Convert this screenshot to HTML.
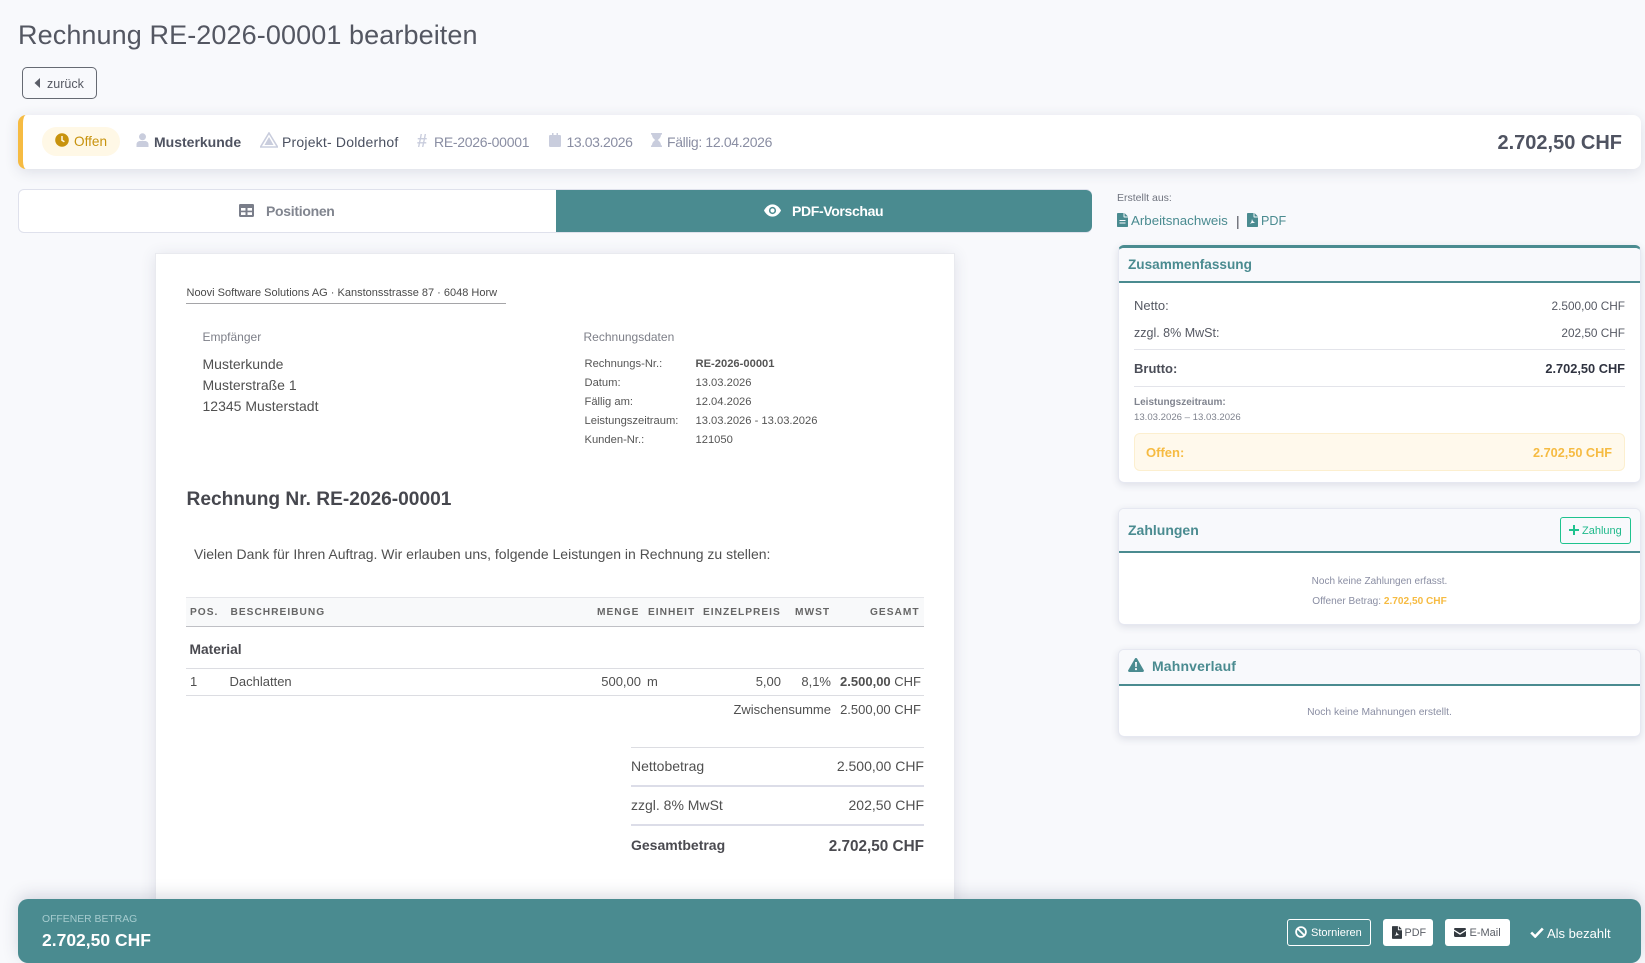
<!DOCTYPE html>
<html lang="de"><head><meta charset="utf-8"><title>Rechnung</title>
<style>
*{box-sizing:border-box}
html,body{margin:0;padding:0;width:1645px;height:963px;overflow:hidden}
body{position:relative;background:#f8f9fc;font-family:"Liberation Sans",Arial,sans-serif;color:#4b4e58}
.b{position:absolute}
.t{position:absolute;white-space:nowrap;line-height:20px;height:20px}
.r{text-align:right}
.c{text-align:center}
svg{position:absolute;display:block}
.card{position:absolute;background:#fff;border-radius:6px;box-shadow:0 2px 8px rgba(60,65,100,.14);border:1px solid #e6e8f1;overflow:hidden}
.hd{position:absolute;left:0;right:0;top:0;background:#f8f9fc;border-bottom:2.5px solid #4a8b90}
.ln{position:absolute;height:1px;background:#e3e4ea}
.h{top:603px;font-size:10.2px;font-weight:700;color:#666;letter-spacing:1px}
.d{font-size:11.2px;color:#555}
.m{font-size:13px;color:#505050}
</style></head><body>

<div class="t" style="left:18px;top:20px;height:30px;line-height:30px;font-size:27px;color:#545762;letter-spacing:.1px">Rechnung RE-2026-00001 bearbeiten</div>
<div class="b" style="left:22px;top:67px;width:75px;height:32px;border:1px solid #666a73;border-radius:5px"></div>
<svg style="left:34px;top:78px" width="7" height="10" viewBox="0 0 7 10"><path d="M6 0L0.5 5 6 10z" fill="#5a5d67"/></svg>
<div class="t" style="left:47px;top:74px;font-size:12.5px;color:#565963">zurück</div>

<div class="b" style="left:18px;top:115px;width:1623px;height:54px;background:#fff;border-left:5px solid #f6bb42;border-radius:8px;box-shadow:0 3px 14px rgba(60,65,100,.14)"></div>
<div class="b" style="left:42px;top:127px;width:78px;height:29px;background:#fff8e6;border-radius:15px"></div>
<svg style="left:55px;top:133px" width="14" height="14" viewBox="0 0 14 14"><circle cx="7" cy="7" r="6.8" fill="#c8930e"/><path d="M7 3v4.3l2.4 1.5" stroke="#fff8e6" stroke-width="1.5" fill="none"/></svg>
<div class="t" style="left:74px;top:132px;font-size:13.6px;color:#c8930e">Offen</div>
<svg style="left:136px;top:133px" width="13" height="14" viewBox="0 0 13 14"><circle cx="6.5" cy="3.8" r="3.5" fill="#c9cddd"/><path d="M0.5 14v-2.5C.5 9 2.5 8 4 8h5c1.500 0 3.500 1 3.500 3.500V14z" fill="#c9cddd"/></svg>
<div class="t" style="left:154px;top:132px;font-size:14px;font-weight:700;color:#4f5361">Musterkunde</div>
<svg style="left:260px;top:132px" width="18" height="16" viewBox="0 0 18 16"><path d="M9 1L17.500 15H.5z" fill="none" stroke="#c9cddd" stroke-width="1.6"/><path d="M9 5l4.500 8h-9z" fill="#c9cddd"/></svg>
<div class="t" style="left:282px;top:132px;font-size:14px;color:#4a5060;letter-spacing:.2px">Projekt- Dolderhof</div>
<div class="t" style="left:417px;top:131px;font-size:18px;font-weight:700;color:#c9cddd">#</div>
<div class="t" style="left:434px;top:132px;font-size:14px;color:#8a8ea3;letter-spacing:-.28px">RE-2026-00001</div>
<svg style="left:549px;top:133px" width="12" height="14" viewBox="0 0 12 14"><path d="M0 3.2Q0 2 1.300 2H3V0h1.500v2h3V0H9v2h1.700Q12 2 12 3.200V13q0 1-1.300 1H1.300Q0 14 0 13z" fill="#c9cddd"/></svg>
<div class="t" style="left:566.5px;top:132px;font-size:14px;color:#8a8ea3;letter-spacing:-.4px">13.03.2026</div>
<svg style="left:651px;top:133px" width="11" height="14" viewBox="0 0 11 14"><path d="M0 0h11v1.600h-1C10 4.500 8 6 6.800 7 8 8 10 9.500 10 12.400h1V14H0v-1.600h1C1 9.500 3 8 4.200 7 3 6 1 4.500 1 1.600H0z" fill="#c9cddd"/></svg>
<div class="t" style="left:667px;top:132px;font-size:14px;color:#8a8ea3;letter-spacing:-.35px">Fällig: 12.04.2026</div>
<div class="t r" style="right:23px;top:133px;font-size:20px;font-weight:700;color:#4f5361">2.702,50 CHF</div>

<div class="b" style="left:18px;top:189px;width:1074px;height:44px;background:#fff;border:1px solid #dfe1ec;border-radius:6px"></div>
<div class="b" style="left:556px;top:190px;width:536px;height:42px;background:#4a8b90;border-radius:0 6px 6px 0"></div>
<svg style="left:239px;top:204px" width="15" height="13" viewBox="0 0 15 13"><path fill-rule="evenodd" d="M1.200 0h12.600Q15 0 15 1.200v10.600q0 1.200-1.200 1.200H1.200Q0 13 0 11.800V1.200Q0 0 1.200 0zM2 4v2.600h4.500V4zM8.500 4v2.600H13V4zM2 8.300V11h4.500V8.300zM8.500 8.300V11H13V8.300z" fill="#7a7e8a"/></svg>
<div class="t" style="left:266px;top:201px;font-size:14px;font-weight:700;color:#81858f;letter-spacing:-.3px">Positionen</div>
<svg style="left:764px;top:204px" width="17" height="13" viewBox="0 0 18 13"><path d="M0 6.500C2 2.500 5.500 0 9 0s7 2.500 9 6.500C16 10.500 12.500 13 9 13S2 10.500 0 6.500z" fill="#fff"/><circle cx="9" cy="6.500" r="3.800" fill="#4a8b90"/><circle cx="9" cy="6.500" r="2.200" fill="#fff"/></svg>
<div class="t" style="left:792px;top:201px;font-size:14px;font-weight:700;color:#fff;letter-spacing:-.35px">PDF-Vorschau</div>

<!-- PDF paper -->
<div class="b" style="left:155px;top:253px;width:800px;height:700px;background:#fff;border:1px solid #e9eaef;box-shadow:0 2px 14px rgba(60,65,100,.13)"></div>
<div class="t" style="left:186.5px;top:283px;font-size:11px;color:#4a4a4a">Noovi Software Solutions AG · Kanstonsstrasse 87 · 6048 Horw</div>
<div class="b" style="left:186px;top:303px;width:320px;height:1px;background:#a5a5a8"></div>
<div class="t" style="left:202.5px;top:327px;font-size:12px;color:#7d7f88">Empfänger</div>
<div class="t" style="left:202.5px;top:354px;font-size:14px;color:#505050">Musterkunde</div>
<div class="t" style="left:202.5px;top:375px;font-size:14px;color:#505050">Musterstraße 1</div>
<div class="t" style="left:202.5px;top:396px;font-size:14px;color:#505050">12345 Musterstadt</div>
<div class="t" style="left:583.5px;top:327px;font-size:12px;color:#7d7f88">Rechnungsdaten</div>
<div class="t d" style="left:584.5px;top:354px">Rechnungs-Nr.:</div>
<div class="t d" style="left:695.5px;top:354px;font-weight:700">RE-2026-00001</div>
<div class="t d" style="left:584.5px;top:373px">Datum:</div>
<div class="t d" style="left:695.5px;top:373px">13.03.2026</div>
<div class="t d" style="left:584.5px;top:392px">Fällig am:</div>
<div class="t d" style="left:695.5px;top:392px">12.04.2026</div>
<div class="t d" style="left:584.5px;top:411px">Leistungszeitraum:</div>
<div class="t d" style="left:695.5px;top:411px">13.03.2026 - 13.03.2026</div>
<div class="t d" style="left:584.5px;top:430px">Kunden-Nr.:</div>
<div class="t d" style="left:695.5px;top:430px">121050</div>
<div class="t" style="left:186.5px;top:490px;font-size:19.15px;font-weight:700;color:#46474e">Rechnung Nr. RE-2026-00001</div>
<div class="t" style="left:194px;top:544px;font-size:14px;color:#505050">Vielen Dank für Ihren Auftrag. Wir erlauben uns, folgende Leistungen in Rechnung zu stellen:</div>

<div class="b" style="left:186px;top:597px;width:738px;height:30px;background:#f8f9fa;border-top:1px solid #e4e5e9;border-bottom:1px solid #bfc0c5"></div>
<div class="t h" style="left:190px">POS.</div>
<div class="t h" style="left:230.5px">BESCHREIBUNG</div>
<div class="t h" style="left:597px">MENGE</div>
<div class="t h" style="left:648px">EINHEIT</div>
<div class="t h" style="left:703px">EINZELPREIS</div>
<div class="t h" style="left:795px">MWST</div>
<div class="t h" style="left:870px">GESAMT</div>
<div class="t" style="left:189.5px;top:639.5px;font-size:13.8px;font-weight:700;color:#4a4a50">Material</div>
<div class="b" style="left:186px;top:668px;width:738px;height:1px;background:#dcdde2"></div>
<div class="t m" style="left:190px;top:672px">1</div>
<div class="t m" style="left:229.5px;top:672px">Dachlatten</div>
<div class="t m r" style="right:1004px;top:672px">500,00</div>
<div class="t m" style="left:647px;top:672px">m</div>
<div class="t m r" style="right:864px;top:672px">5,00</div>
<div class="t m r" style="right:814px;top:672px">8,1%</div>
<div class="t m r" style="right:724px;top:672px"><b>2.500,00</b> CHF</div>
<div class="b" style="left:186px;top:695px;width:738px;height:1px;background:#dcdde2"></div>
<div class="t m r" style="right:814px;top:700px">Zwischensumme</div>
<div class="t m r" style="right:724px;top:700px">2.500,00 CHF</div>

<div class="b" style="left:631px;top:747px;width:293px;height:1px;background:#dcdde2"></div>
<div class="t" style="left:631px;top:756px;font-size:14px;color:#505050">Nettobetrag</div>
<div class="t r" style="right:721px;top:756px;font-size:14px;color:#505050">2.500,00 CHF</div>
<div class="b" style="left:631px;top:785px;width:293px;height:2px;background:#dcdde8"></div>
<div class="t" style="left:631px;top:795px;font-size:14px;color:#505050">zzgl. 8% MwSt</div>
<div class="t r" style="right:721px;top:795px;font-size:14px;color:#505050">202,50 CHF</div>
<div class="b" style="left:631px;top:824px;width:293px;height:2px;background:#dcdde8"></div>
<div class="t" style="left:631px;top:834.5px;font-size:14px;font-weight:700;color:#4a4a50">Gesamtbetrag</div>
<div class="t r" style="right:721px;top:836.5px;font-size:15.3px;font-weight:700;color:#4a4a50">2.702,50 CHF</div>

<!-- right column -->
<div class="t" style="left:1117px;top:187.500px;font-size:10.5px;color:#70747f">Erstellt aus:</div>
<svg style="left:1117px;top:213px" width="11" height="14" viewBox="0 0 11 14"><path fill-rule="evenodd" d="M0 .8Q0 0 .8 0H6.500v3.800q0 .7.700.7H11v8.700q0 .8-.8.8H.8Q0 14 0 13.200zM7.500 0L11 3.500H7.500zM2.500 7v1h6V7zM2.500 9.500v1h6v-1z" fill="#4a8b90"/></svg>
<div class="t" style="left:1131px;top:210.500px;font-size:13.3px;color:#4a8b90">Arbeitsnachweis</div>
<div class="t" style="left:1236px;top:210.500px;font-size:14px;color:#4b4e58">|</div>
<svg style="left:1247px;top:213px" width="11" height="14" viewBox="0 0 11 14"><path fill-rule="evenodd" d="M0 .8Q0 0 .8 0H6.500v3.800q0 .7.700.7H11v8.700q0 .8-.8.8H.8Q0 14 0 13.200zM7.500 0L11 3.500H7.500zM5 6c-.5 1.500 0 3-2.500 5.200C4.500 10 6.500 9.800 8.500 10 6.500 9 5.500 8 5 6z" fill="#4a8b90"/></svg>
<div class="t" style="left:1261px;top:210.500px;font-size:12.6px;color:#4a8b90">PDF</div>

<div class="card" style="left:1118px;top:245px;width:523px;height:238px;border-top:3px solid #4a8b90">
 <div class="hd" style="height:35px"></div>
</div>
<div class="t" style="left:1128px;top:255px;font-size:13.6px;font-weight:700;color:#4a8b90">Zusammenfassung</div>
<div class="t" style="left:1134px;top:296px;font-size:13px;color:#565963">Netto:</div>
<div class="t r" style="right:20px;top:296px;font-size:11.8px;color:#565963">2.500,00 CHF</div>
<div class="t" style="left:1134px;top:323px;font-size:12.5px;color:#565963">zzgl. 8% MwSt:</div>
<div class="t r" style="right:20px;top:323px;font-size:11.8px;color:#565963">202,50 CHF</div>
<div class="ln" style="left:1134px;top:349px;width:491px"></div>
<div class="t" style="left:1134px;top:359px;font-size:13px;font-weight:700;color:#4b4e58">Brutto:</div>
<div class="t r" style="right:20px;top:359px;font-size:12.8px;font-weight:700;color:#2f3340">2.702,50 CHF</div>
<div class="ln" style="left:1134px;top:386px;width:491px"></div>
<div class="t" style="left:1134px;top:392.500px;font-size:10px;font-weight:700;color:#80848f">Leistungszeitraum:</div>
<div class="t" style="left:1134px;top:408px;font-size:9.6px;color:#80848f">13.03.2026 – 13.03.2026</div>
<div class="b" style="left:1134px;top:433px;width:491px;height:38px;background:#fff9ec;border:1px solid #fcefcf;border-radius:6px"></div>
<div class="t" style="left:1146px;top:442.500px;font-size:13px;font-weight:700;color:#f6bb42">Offen:</div>
<div class="t r" style="right:33px;top:442.500px;font-size:12.7px;font-weight:700;color:#f6bb42">2.702,50 CHF</div>

<div class="card" style="left:1118px;top:508px;width:523px;height:117px">
 <div class="hd" style="height:44px"></div>
</div>
<div class="t" style="left:1128px;top:520px;font-size:14px;font-weight:700;color:#4a8b90">Zahlungen</div>
<div class="b" style="left:1560px;top:517px;width:71px;height:27px;border:1px solid #1fc38e;border-radius:3px"></div>
<svg style="left:1569px;top:525px" width="10" height="10" viewBox="0 0 10 10"><path d="M5 0v10M0 5h10" stroke="#1fc38e" stroke-width="2"/></svg>
<div class="t" style="left:1582px;top:520.500px;font-size:11px;color:#1fb98b">Zahlung</div>
<div class="t c" style="left:1118px;width:523px;top:571.500px;font-size:10px;color:#8a8ea3">Noch keine Zahlungen erfasst.</div>
<div class="t c" style="left:1118px;width:523px;top:591.500px;font-size:10.1px;color:#8a8ea3">Offener Betrag: <b style="color:#f6bb42">2.702,50 CHF</b></div>

<div class="card" style="left:1118px;top:649px;width:523px;height:88px">
 <div class="hd" style="height:36px"></div>
</div>
<svg style="left:1128px;top:658px" width="16" height="14" viewBox="0 0 16 14"><path fill-rule="evenodd" d="M8 0q.8 0 1.200.7l6.600 11.500q.6 1.600-1.200 1.800H1.400q-1.800-.2-1.200-1.800L6.800.7Q7.200 0 8 0zM7 4l.3 5h1.400L9 4zM8 10a1.100 1.100 0 100 2.200A1.100 1.100 0 008 10z" fill="#4a8b90"/></svg>
<div class="t" style="left:1152px;top:656px;font-size:14px;font-weight:700;color:#4a8b90;letter-spacing:.15px">Mahnverlauf</div>
<div class="t c" style="left:1118px;width:523px;top:702.500px;font-size:10.3px;color:#8a8ea3;top:702.500px">Noch keine Mahnungen erstellt.</div>

<!-- bottom bar -->
<div class="b" style="left:18px;top:899px;width:1623px;height:64px;background:#4a8b90;border-radius:10px;box-shadow:0 -4px 16px rgba(60,65,100,.18)"></div>
<div class="t" style="left:42px;top:910px;font-size:10.4px;color:#a6cccf">OFFENER BETRAG</div>
<div class="t" style="left:42px;top:929.500px;font-size:17.5px;font-weight:700;color:#fff">2.702,50 CHF</div>
<div class="b" style="left:1287px;top:919px;width:84px;height:27px;border:1px solid #fff;border-radius:3px"></div>
<svg style="left:1295px;top:926px" width="12" height="12" viewBox="0 0 12 12"><circle cx="6" cy="6" r="4.900" fill="none" stroke="#fff" stroke-width="1.800"/><path d="M2.500 2.500l7 7" stroke="#fff" stroke-width="1.800"/></svg>
<div class="t" style="left:1311px;top:922.500px;font-size:11px;color:#fff">Stornieren</div>
<div class="b" style="left:1383px;top:919px;width:50px;height:27px;background:#fff;border-radius:3px"></div>
<svg style="left:1392px;top:926px" width="10" height="13" viewBox="0 0 11 14"><path fill-rule="evenodd" d="M0 .8Q0 0 .8 0H6.500v3.800q0 .7.700.7H11v8.700q0 .8-.8.8H.8Q0 14 0 13.200zM7.500 0L11 3.500H7.500zM5 6c-.5 1.500 0 3-2.500 5.200C4.500 10 6.500 9.800 8.500 10 6.500 9 5.500 8 5 6z" fill="#343a40"/></svg>
<div class="t" style="left:1404.500px;top:922.500px;font-size:10.8px;color:#5a5e66">PDF</div>
<div class="b" style="left:1445px;top:919px;width:65px;height:27px;background:#fff;border-radius:3px"></div>
<svg style="left:1454px;top:928px" width="12" height="9" viewBox="0 0 12 9"><path d="M0 1.200Q0 0 1.200 0h9.600Q12 0 12 1.200v.3L6 5.300 0 1.500zM0 3l6 3.800L12 3v4.800Q12 9 10.800 9H1.200Q0 9 0 7.800z" fill="#343a40"/></svg>
<div class="t" style="left:1469.500px;top:922.500px;font-size:11px;color:#5a5e66">E-Mail</div>
<svg style="left:1530px;top:927px" width="14" height="11" viewBox="0 0 14 11"><path d="M1.200 5.500l4 4L12.800 1.500" fill="none" stroke="#fff" stroke-width="2.600"/></svg>
<div class="t" style="left:1547px;top:923.500px;font-size:13px;color:#fff">Als bezahlt</div>
</body></html>
